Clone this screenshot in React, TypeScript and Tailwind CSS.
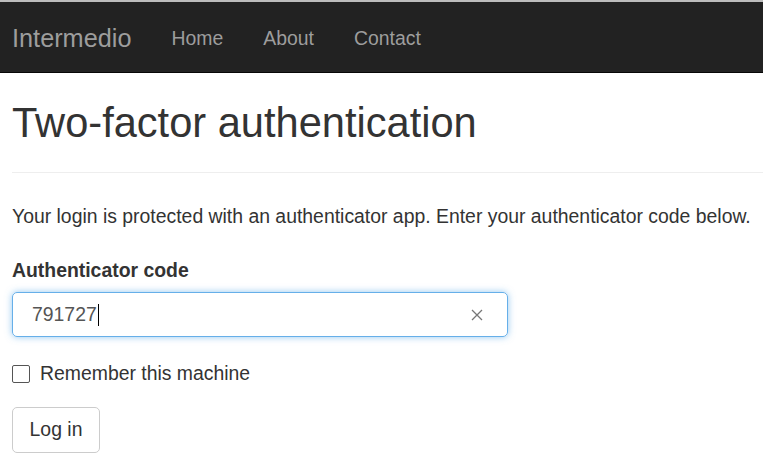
import React from 'react';

const navLinks = ['Home', 'About', 'Contact'];

export default function App() {
  return (
    <div className="min-h-screen bg-white text-[#333] font-['Liberation_Sans',Arial,sans-serif]">
      {/* top strip + navbar */}
      <div className="h-[2px] bg-[#bdbdbd]" />
      <nav className="h-[71px] bg-[#222] border-b border-[#080808] flex items-center pt-[3px] px-[12px]">
        <span className="text-[25.3px] text-[#9d9d9d] mr-[40px]">Intermedio</span>
        <ul className="flex gap-[40px]">
          {navLinks.map((l) => (
            <li key={l} className="text-[19.4px] text-[#9d9d9d]">{l}</li>
          ))}
        </ul>
      </nav>

      <main className="pl-[12px]">
        <h1 className="text-[41.6px] leading-none pt-[29px] pb-[28px] border-b border-[#eee] whitespace-nowrap">
          Two-factor authentication
        </h1>
        <p className="text-[19.4px] mt-[29px] whitespace-nowrap">
          Your login is protected with an authenticator app. Enter your authenticator code below.
        </p>

        <form className="mt-[30px] flex flex-col">
          <label className="text-[19.4px] font-bold leading-none">Authenticator code</label>
          <div className="mt-[12px] w-[496px] h-[45px] rounded-[5px] border border-[#66afe9] shadow-[0_0_7px_rgba(102,175,233,0.7)] flex items-center pl-[19px] pr-[24px]">
            <span className="text-[19.4px] text-[#555] flex-1 flex items-center">
              791727
              <span className="inline-block w-px h-[22px] bg-black ml-px" />
            </span>
            <svg width="12" height="12" viewBox="0 0 12 12" className="text-[#777]">
              <path d="M1 1L11 11M11 1L1 11" stroke="currentColor" strokeWidth="1.3" />
            </svg>
          </div>

          <div className="mt-[27px] flex items-center gap-[10px]">
            <span className="w-[18px] h-[18px] border border-[#555] rounded-[2px] bg-white" />
            <span className="text-[19.4px] leading-none">Remember this machine</span>
          </div>

          <div className="mt-[23px]">
            <button
              type="button"
              className="w-[88px] h-[46px] rounded-[5px] border border-[#ccc] bg-white text-[19.4px] text-[#333]"
            >
              Log in
            </button>
          </div>
        </form>
      </main>
    </div>
  );
}
